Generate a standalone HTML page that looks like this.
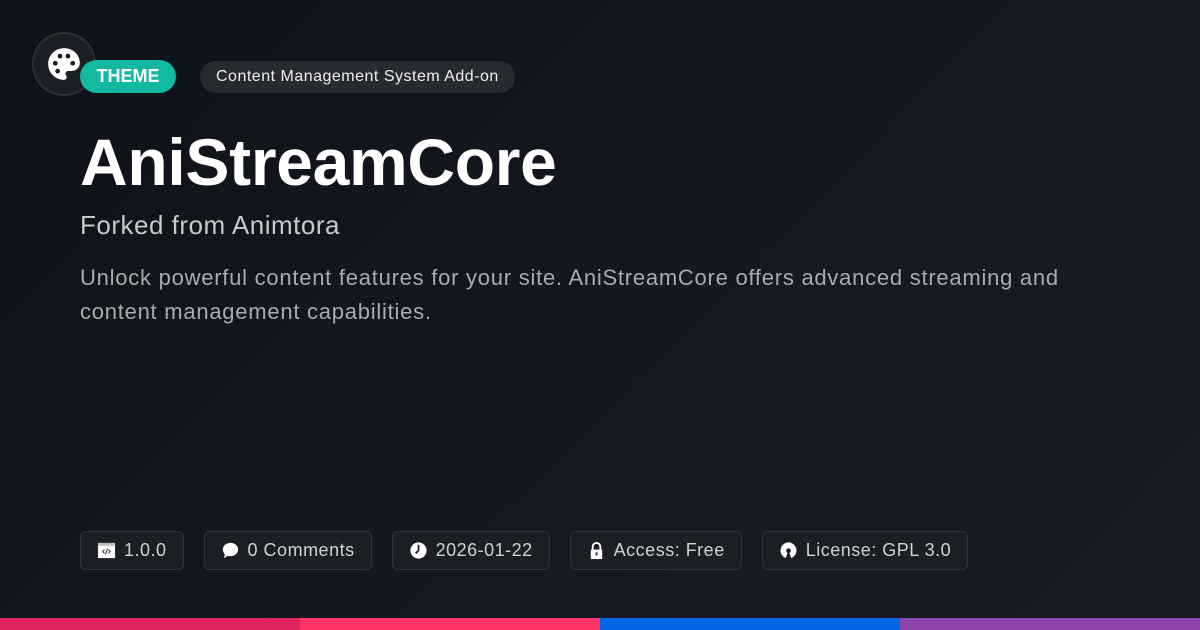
<!DOCTYPE html>
<html><head><style>
*{margin:0;padding:0;box-sizing:border-box}
body{width:1200px;height:630px;overflow:hidden;background:linear-gradient(135deg,#0f1119 0%,#161922 60%,#181b24 100%);font-family:"Liberation Sans",sans-serif;position:relative;color:#fff}
.logo{position:absolute;left:32px;top:32px;width:64px;height:64px;border-radius:50%;background:#1c1e25;border:2px solid #2c2e35;display:flex;align-items:center;justify-content:center}
.theme{position:absolute;left:80px;top:60px;height:33px;width:96px;border-radius:17px;background:#13b8a0;font-weight:bold;font-size:18px;line-height:33px;text-align:center}
.cat{position:absolute;left:200px;top:61px;height:32px;padding:0 16px;border-radius:16px;background:#282a31;font-size:16px;letter-spacing:0.5px;line-height:32px;color:#eee}
h1{position:absolute;left:80px;top:124px;font-size:66px;font-weight:bold;letter-spacing:-0.3px}
.sub{position:absolute;left:80px;top:210px;font-size:26px;letter-spacing:0.5px;color:#c8c9cc}
.desc{position:absolute;left:80px;top:261px;width:1100px;font-size:22px;letter-spacing:0.75px;line-height:34px;color:#a9abb1;white-space:nowrap}
.tags{position:absolute;top:531px;left:80px;display:flex;gap:20px}
.tag{height:39px;border:1px solid #30333b;border-radius:6px;background:#1c1e26;display:flex;align-items:center;padding:0 16px;font-size:18px;letter-spacing:0.5px;color:#d0d1d4;gap:8px}
.tag svg{width:19px;height:19px}
.bar{position:absolute;bottom:0;height:12px;width:300px}
</style></head><body>
<div class="logo"><svg width="38" height="38" viewBox="0 0 24 24"><path fill="#fff" d="M12 2C6.5 2 2 6.5 2 12s4.5 10 10 10c1 0 1.7-.7 1.7-1.7 0-.4-.2-.8-.4-1.1-.3-.3-.4-.7-.4-1.1 0-.9.8-1.7 1.7-1.7H17c3 0 5-2.3 5-5C22 6 17.5 2 12 2z"/><circle cx="6.5" cy="11.5" r="1.5" fill="#1c1e25"/><circle cx="9.5" cy="7" r="1.5" fill="#1c1e25"/><circle cx="14.5" cy="7" r="1.5" fill="#1c1e25"/><circle cx="17.5" cy="11.5" r="1.5" fill="#1c1e25"/><circle cx="8" cy="16.5" r="1.5" fill="#1c1e25"/></svg></div>
<div class="theme">THEME</div>
<div class="cat">Content Management System Add-on</div>
<h1>AniStreamCore</h1>
<div class="sub">Forked from Animtora</div>
<div class="desc">Unlock powerful content features for your site. AniStreamCore offers advanced streaming and<br>content management capabilities.</div>
<div class="tags">
<div class="tag"><svg viewBox="0 0 20 20"><rect x="1" y="2" width="18" height="16" fill="#fff"/><rect x="1" y="2" width="18" height="3" fill="#bbb"/><path d="M8 9l-2 2 2 2M12 9l2 2-2 2M11 8l-2 6" stroke="#1c1e26" stroke-width="1" fill="none"/></svg>1.0.0</div>
<div class="tag"><svg viewBox="0 0 20 20"><path fill="#fff" d="M10 2c4.5 0 8 3 8 7s-3.5 7-8 7c-1 0-2-.2-2.8-.5L3 18l1.2-3.8C2.8 13 2 11 2 9c0-4 3.5-7 8-7z"/></svg>0 Comments</div>
<div class="tag"><svg viewBox="0 0 20 20"><circle cx="10" cy="10" r="8.5" fill="#fff"/><path d="M10 4v6l-3 3" stroke="#1c1e26" stroke-width="1.8" fill="none"/></svg>2026-01-22</div>
<div class="tag"><svg viewBox="0 0 20 20"><path d="M6 9V6a4 4 0 018 0v3" stroke="#fff" stroke-width="2" fill="none"/><rect x="4" y="9" width="12" height="10" fill="#fff"/><rect x="9" y="12" width="2" height="3" fill="#1c1e26"/></svg>Access: Free</div>
<div class="tag"><svg viewBox="0 0 20 20"><path fill="#fff" d="M10 1.5a8.5 8.5 0 00-3 16.4l2-5.3a2.5 2.5 0 112 0l2 5.3A8.5 8.5 0 0010 1.5z"/></svg>License: GPL 3.0</div>
</div>
<div class="bar" style="left:0;background:#e0245e"></div>
<div class="bar" style="left:300px;background:#ff3366"></div>
<div class="bar" style="left:600px;background:#0066e6"></div>
<div class="bar" style="left:900px;background:#8e44ad"></div>
</body></html>
